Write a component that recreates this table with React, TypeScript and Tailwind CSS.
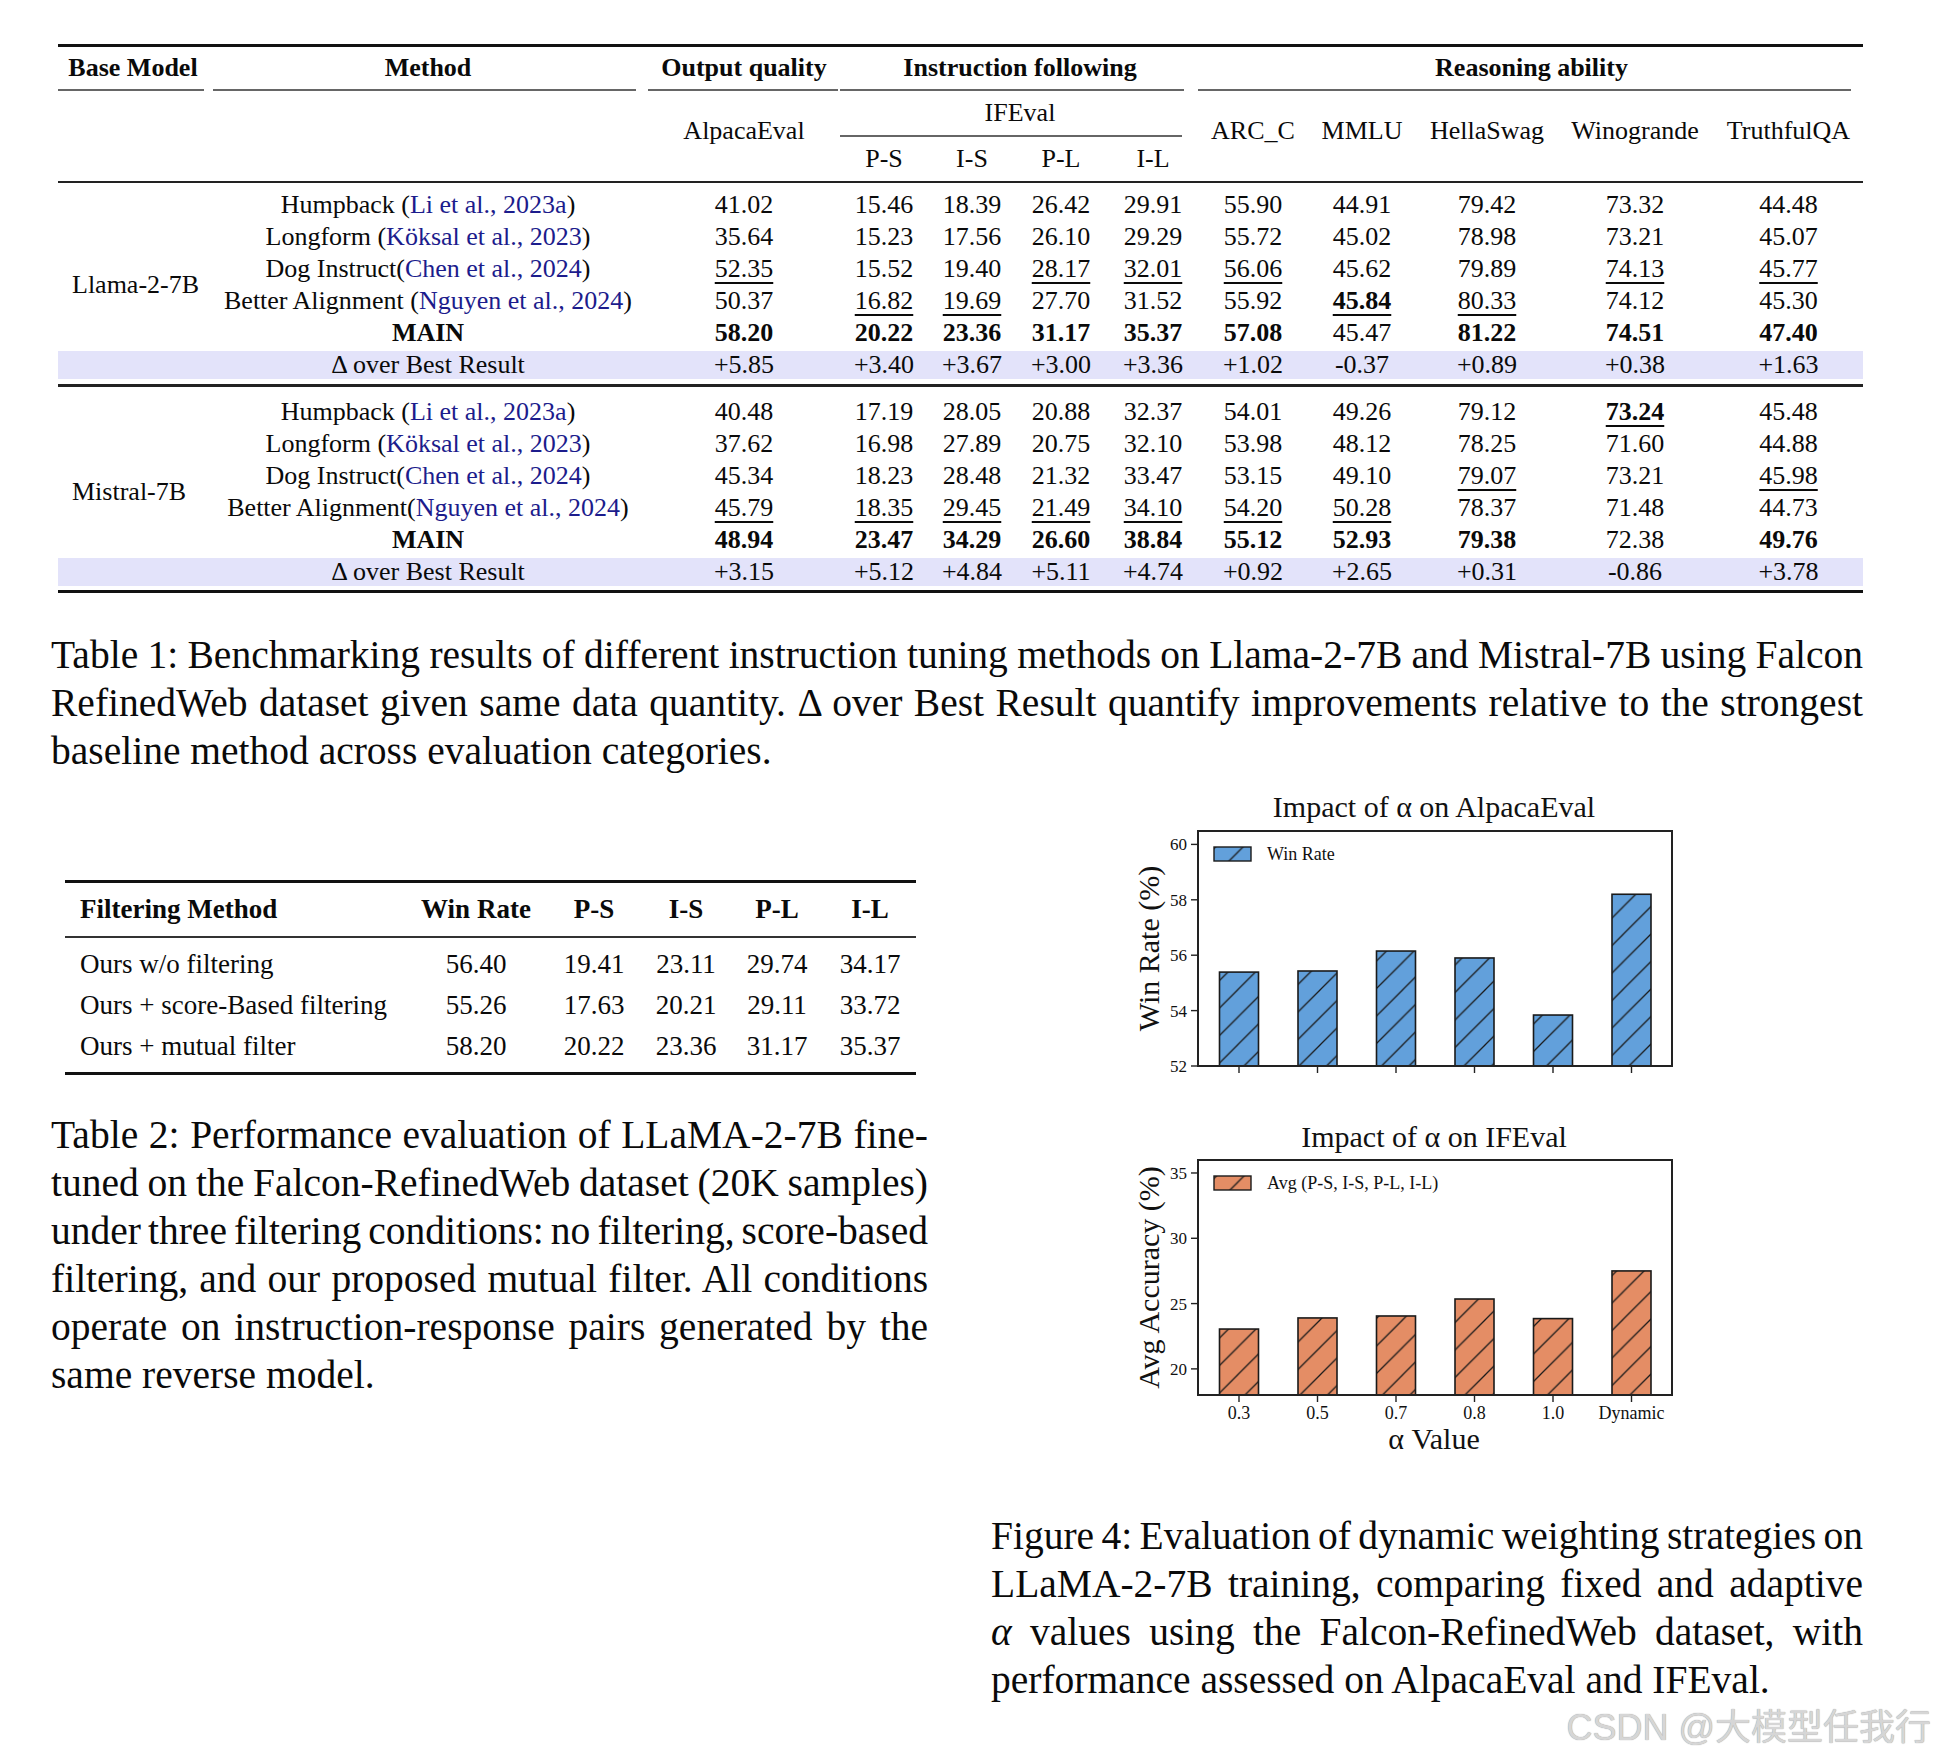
import React from "react";

// column templates, written out so tailwind picks them up
const T1 = "grid grid-cols-[150px_440px_192px_88px_88px_90px_94px_106px_112px_138px_158px_149px]";
const T2 = "grid grid-cols-[355px_112px_124px_60px_122px_64px]";

type Row = { pre: string; cite?: string; post?: string; bold?: boolean; vals: string[] };

// "*" = bold, "_" = underlined
const llama: Row[] = [
  { pre: "Humpback (", cite: "Li et al., 2023a", post: ")", vals: ["41.02", "15.46", "18.39", "26.42", "29.91", "55.90", "44.91", "79.42", "73.32", "44.48"] },
  { pre: "Longform (", cite: "Köksal et al., 2023", post: ")", vals: ["35.64", "15.23", "17.56", "26.10", "29.29", "55.72", "45.02", "78.98", "73.21", "45.07"] },
  { pre: "Dog Instruct(", cite: "Chen et al., 2024", post: ")", vals: ["_52.35", "15.52", "19.40", "_28.17", "_32.01", "_56.06", "45.62", "79.89", "_74.13", "_45.77"] },
  { pre: "Better Alignment (", cite: "Nguyen et al., 2024", post: ")", vals: ["50.37", "_16.82", "_19.69", "27.70", "31.52", "55.92", "*_45.84", "_80.33", "74.12", "45.30"] },
  { pre: "MAIN", bold: true, vals: ["*58.20", "*20.22", "*23.36", "*31.17", "*35.37", "*57.08", "45.47", "*81.22", "*74.51", "*47.40"] },
];
const llamaDelta = ["+5.85", "+3.40", "+3.67", "+3.00", "+3.36", "+1.02", "-0.37", "+0.89", "+0.38", "+1.63"];

const mistral: Row[] = [
  { pre: "Humpback (", cite: "Li et al., 2023a", post: ")", vals: ["40.48", "17.19", "28.05", "20.88", "32.37", "54.01", "49.26", "79.12", "*_73.24", "45.48"] },
  { pre: "Longform (", cite: "Köksal et al., 2023", post: ")", vals: ["37.62", "16.98", "27.89", "20.75", "32.10", "53.98", "48.12", "78.25", "71.60", "44.88"] },
  { pre: "Dog Instruct(", cite: "Chen et al., 2024", post: ")", vals: ["45.34", "18.23", "28.48", "21.32", "33.47", "53.15", "49.10", "_79.07", "73.21", "_45.98"] },
  { pre: "Better Alignment(", cite: "Nguyen et al., 2024", post: ")", vals: ["_45.79", "_18.35", "_29.45", "_21.49", "_34.10", "_54.20", "_50.28", "78.37", "71.48", "44.73"] },
  { pre: "MAIN", bold: true, vals: ["*48.94", "*23.47", "*34.29", "*26.60", "*38.84", "*55.12", "*52.93", "*79.38", "72.38", "*49.76"] },
];
const mistralDelta = ["+3.15", "+5.12", "+4.84", "+5.11", "+4.74", "+0.92", "+2.65", "+0.31", "-0.86", "+3.78"];

const Val = ({ v }: { v: string }) => {
  let s = v;
  let bold = false;
  let under = false;
  if (s.startsWith("*")) {
    bold = true;
    s = s.slice(1);
  }
  if (s.startsWith("_")) {
    under = true;
    s = s.slice(1);
  }
  return (
    <div className="flex items-center justify-center whitespace-nowrap">
      <span
        className={`${bold ? "font-bold" : ""} ${under ? "underline decoration-[1.5px] underline-offset-[5px]" : ""}`}
      >
        {s}
      </span>
    </div>
  );
};

const Group = ({ label, rows, delta }: { label: string; rows: Row[]; delta: string[] }) => (
  <div className={`${T1} auto-rows-[32px]`}>
    <div className="col-start-1 row-start-1 row-span-6 flex items-center pl-[14px]">{label}</div>
    <div className={`${T1} col-start-1 col-span-12 row-start-6 bg-[#e3e3fa] my-[2px]`}>
      <div />
      <div className="flex items-center justify-center whitespace-nowrap">Δ over Best Result</div>
      {delta.map((d, i) => (
        <Val key={i} v={d} />
      ))}
    </div>
    {rows.map((r, i) => (
      <React.Fragment key={i}>
        <div className={`flex items-center justify-center whitespace-nowrap ${r.bold ? "font-bold" : ""}`}>
          {r.pre}
          {r.cite && <span className="text-[#1c1c8c]">{r.cite}</span>}
          {r.post}
        </div>
        {r.vals.map((v, j) => (
          <Val key={j} v={v} />
        ))}
      </React.Fragment>
    ))}
  </div>
);

const Table1 = () => (
  <div className="w-[1805px] text-[26px] leading-none">
    <div className="h-[3px] bg-[#111]" />
    <div className={`${T1} h-[42px] font-bold`}>
      <div className="flex items-center justify-center">Base Model</div>
      <div className="flex items-center justify-center">Method</div>
      <div className="flex items-center justify-center">Output quality</div>
      <div className="col-span-4 flex items-center justify-center">Instruction following</div>
      <div className="col-span-5 flex items-center justify-center">Reasoning ability</div>
    </div>
    {/* cmidrules */}
    <div className={`${T1} h-[2px]`}>
      <div className="mr-[4px] bg-[#666]" />
      <div className="ml-[5px] mr-[12px] bg-[#666]" />
      <div className="mr-[2px] bg-[#666]" />
      <div className="col-span-4 mr-[16px] bg-[#666]" />
      <div className="col-span-5 -ml-[2px] mr-[12px] bg-[#666]" />
    </div>
    <div className={`${T1} grid-rows-[44px_2px_44px]`}>
      <div className="col-start-3 row-start-1 row-span-3 flex items-center justify-center pb-[10px]">AlpacaEval</div>
      <div className="col-start-4 col-span-4 row-start-1 flex items-center justify-center">IFEval</div>
      <div className="col-start-4 col-span-4 row-start-2 mr-[18px] bg-[#666]" />
      <div className="col-start-4 row-start-3 flex items-center justify-center">P-S</div>
      <div className="col-start-5 row-start-3 flex items-center justify-center">I-S</div>
      <div className="col-start-6 row-start-3 flex items-center justify-center">P-L</div>
      <div className="col-start-7 row-start-3 flex items-center justify-center">I-L</div>
      <div className="col-start-8 row-start-1 row-span-3 flex items-center justify-center pb-[10px]">ARC_C</div>
      <div className="col-start-9 row-start-1 row-span-3 flex items-center justify-center pb-[10px]">MMLU</div>
      <div className="col-start-10 row-start-1 row-span-3 flex items-center justify-center pb-[10px]">HellaSwag</div>
      <div className="col-start-11 row-start-1 row-span-3 flex items-center justify-center pb-[10px]">Winogrande</div>
      <div className="col-start-12 row-start-1 row-span-3 flex items-center justify-center pb-[10px]">TruthfulQA</div>
    </div>
    <div className="h-[2px] bg-[#222]" />
    <div className="pt-[6px]">
      <Group label="Llama-2-7B" rows={llama} delta={llamaDelta} />
    </div>
    <div className="mt-[3px] h-[3px] bg-[#222]" />
    <div className="pt-[9px]">
      <Group label="Mistral-7B" rows={mistral} delta={mistralDelta} />
    </div>
    <div className="mt-[2px] h-[3px] bg-[#111]" />
  </div>
);

// justified lines; spaces are squeezed a little first so over-long lines still fit
const Lines = ({ lines }: { lines: React.ReactNode[] }) => (
  <>
    {lines.map((l, i) => (
      <div
        key={i}
        className={
          i < lines.length - 1
            ? "whitespace-nowrap text-justify [text-align-last:justify] [word-spacing:-4px]"
            : "whitespace-nowrap"
        }
      >
        {l}
      </div>
    ))}
  </>
);

const filterRows = [
  ["Ours w/o filtering", "56.40", "19.41", "23.11", "29.74", "34.17"],
  ["Ours + score-Based filtering", "55.26", "17.63", "20.21", "29.11", "33.72"],
  ["Ours + mutual filter", "58.20", "20.22", "23.36", "31.17", "35.37"],
];

const Table2 = () => (
  <div className="w-[851px] text-[27px] leading-none">
    <div className="h-[3px] bg-[#111]" />
    <div className={`${T2} h-[53px] font-bold`}>
      <div className="flex items-center pl-[15px]">Filtering Method</div>
      {["Win Rate", "P-S", "I-S", "P-L", "I-L"].map((h) => (
        <div key={h} className="flex items-center justify-center whitespace-nowrap">
          {h}
        </div>
      ))}
    </div>
    <div className="h-[2px] bg-[#333]" />
    <div className={`${T2} auto-rows-[41px] pt-[6px] pb-[5px]`}>
      {filterRows.map((r) => (
        <React.Fragment key={r[0]}>
          <div className="flex items-center pl-[15px] whitespace-nowrap">{r[0]}</div>
          {r.slice(1).map((v, j) => (
            <div key={j} className="flex items-center justify-center whitespace-nowrap">
              {v}
            </div>
          ))}
        </React.Fragment>
      ))}
    </div>
    <div className="h-[3px] bg-[#111]" />
  </div>
);

type ChartProps = {
  title: string;
  titleY: number;
  top: number;
  bottom: number;
  ymin: number;
  scale: number;
  ticks: number[];
  values: number[];
  color: string;
  legend: string;
  legendY: number;
  ylabel: string;
  xlabels?: string[];
};

const L = 1198;
const R = 1672;
const barX = (i: number) => 1239 + i * 78.5;

const Chart = (p: ChartProps) => {
  const y = (v: number) => p.bottom - (v - p.ymin) * p.scale;
  const cy = (p.top + p.bottom) / 2;
  return (
    <g fontFamily="'Liberation Serif', 'Times New Roman', serif" fill="#111">
      <text x={1434} y={p.titleY} fontSize={30} textAnchor="middle">
        {p.title}
      </text>
      {p.values.map((v, i) => (
        <g key={i}>
          <rect x={barX(i) - 19.5} y={y(v)} width={39} height={p.bottom - y(v)} fill={p.color} />
          <rect x={barX(i) - 19.5} y={y(v)} width={39} height={p.bottom - y(v)} fill="url(#hatch)" />
          <rect
            x={barX(i) - 19.5}
            y={y(v)}
            width={39}
            height={p.bottom - y(v)}
            fill="none"
            stroke="#1a1a1a"
            strokeWidth={1.6}
          />
          <line x1={barX(i)} x2={barX(i)} y1={p.bottom} y2={p.bottom + 7} stroke="#222" strokeWidth={1.4} />
          {p.xlabels && (
            <text x={barX(i)} y={p.bottom + 24} fontSize={18} textAnchor="middle">
              {p.xlabels[i]}
            </text>
          )}
        </g>
      ))}
      <rect x={L} y={p.top} width={R - L} height={p.bottom - p.top} fill="none" stroke="#222" strokeWidth={2} />
      {p.ticks.map((t) => (
        <g key={t}>
          <line x1={L - 7} x2={L} y1={y(t)} y2={y(t)} stroke="#222" strokeWidth={1.4} />
          <text x={L - 11} y={y(t) + 6} fontSize={17} textAnchor="end">
            {t}
          </text>
        </g>
      ))}
      {/* legend */}
      <rect x={1214} y={p.legendY - 7} width={37} height={14} fill={p.color} />
      <rect x={1214} y={p.legendY - 7} width={37} height={14} fill="url(#hatch)" />
      <rect x={1214} y={p.legendY - 7} width={37} height={14} fill="none" stroke="#1a1a1a" strokeWidth={1.4} />
      <text x={1267} y={p.legendY + 6} fontSize={18}>
        {p.legend}
      </text>
      <text x={1159} y={cy} fontSize={30} textAnchor="middle" transform={`rotate(-90 1159 ${cy})`}>
        {p.ylabel}
      </text>
    </g>
  );
};

const Figure = () => (
  <svg width={872} height={680} viewBox="991 780 872 680" className="block">
    <defs>
      <pattern id="hatch" patternUnits="userSpaceOnUse" width={27.5} height={27.5}>
        <path
          d="M0 27.5 L27.5 0 M-6.9 6.9 L6.9 -6.9 M20.6 34.4 L34.4 20.6"
          stroke="#1a1a1a"
          strokeWidth={1.3}
          fill="none"
        />
      </pattern>
    </defs>
    <Chart
      title="Impact of α on AlpacaEval"
      titleY={817}
      top={831}
      bottom={1066}
      ymin={52}
      scale={27.7}
      ticks={[52, 54, 56, 58, 60]}
      values={[55.39, 55.43, 56.15, 55.9, 53.84, 58.2]}
      color="#62a0db"
      legend="Win Rate"
      legendY={854}
      ylabel="Win Rate (%)"
    />
    <Chart
      title="Impact of α on IFEval"
      titleY={1147}
      top={1160}
      bottom={1395}
      ymin={18}
      scale={13.06}
      ticks={[20, 25, 30, 35]}
      values={[23.05, 23.9, 24.05, 25.35, 23.85, 27.5]}
      color="#e48d65"
      legend="Avg (P-S, I-S, P-L, I-L)"
      legendY={1183}
      ylabel="Avg Accuracy (%)"
      xlabels={["0.3", "0.5", "0.7", "0.8", "1.0", "Dynamic"]}
    />
    <text
      x={1434}
      y={1449}
      fontSize={30}
      textAnchor="middle"
      fill="#111"
      fontFamily="'Liberation Serif', 'Times New Roman', serif"
    >
      α Value
    </text>
  </svg>
);

export default function App() {
  return (
    <div className="w-[1935px] h-[1760px] overflow-hidden bg-white text-[#0a0a0a] font-['Liberation_Serif','Times_New_Roman',serif]">
      <div className="pt-[44px] pl-[58px]">
        <Table1 />
      </div>

      <div className="ml-[51px] mt-[38px] w-[1812px] text-[39.5px] leading-[48px]">
        <Lines
          lines={[
            "Table 1: Benchmarking results of different instruction tuning methods on Llama-2-7B and Mistral-7B using Falcon",
            "RefinedWeb dataset given same data quantity. Δ over Best Result quantify improvements relative to the strongest",
            "baseline method across evaluation categories.",
          ]}
        />
      </div>

      <div className="flex">
        <div className="w-[928px] shrink-0">
          <div className="ml-[65px] mt-[105px]">
            <Table2 />
          </div>
          <div className="ml-[51px] mt-[36px] w-[877px] text-[39.5px] leading-[48px]">
            <Lines
              lines={[
                "Table 2: Performance evaluation of LLaMA-2-7B fine-",
                "tuned on the Falcon-RefinedWeb dataset (20K samples)",
                "under three filtering conditions: no filtering, score-based",
                "filtering, and our proposed mutual filter. All conditions",
                "operate on instruction-response pairs generated by the",
                "same reverse model.",
              ]}
            />
          </div>
        </div>
        <div className="ml-[63px] mt-[5px]">
          <Figure />
          <div className="mt-[52px] w-[872px] text-[39.5px] leading-[48px]">
            <Lines
              lines={[
                "Figure 4: Evaluation of dynamic weighting strategies on",
                "LLaMA-2-7B training, comparing fixed and adaptive",
                <>
                  <i>α</i> values using the Falcon-RefinedWeb dataset, with
                </>,
                "performance assessed on AlpacaEval and IFEval.",
              ]}
            />
          </div>
        </div>
      </div>

      <div className="flex justify-end pr-[4px] mt-[4px]">
        <span className="text-[36px] leading-[40px] text-[#d6d6d6] [text-shadow:0_0_1px_#8a8a8a] font-['Liberation_Sans','Noto_Sans_CJK_SC',sans-serif]">
          CSDN @大模型任我行
        </span>
      </div>
    </div>
  );
}
